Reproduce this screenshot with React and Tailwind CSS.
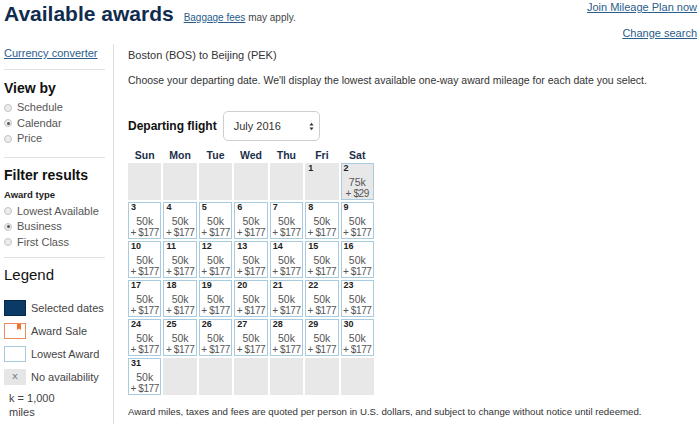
import React from 'react';

const days = [
  null, null, null, null, null, { d: 1, empty: true }, { d: 2, miles: '75k', fee: '$29', gray: true },
];
for (let d = 3; d <= 31; d++) days.push({ d, miles: '50k', fee: '$177' });
while (days.length < 42) days.push(null);

const Radio = ({ label, checked }) => (
  <div className="flex items-center h-[15.5px]">
    <span className="w-[8px] h-[8px] rounded-full border border-[#c4c4c4] bg-[#ececec] flex items-center justify-center">
      {checked && <span className="w-[3px] h-[3px] rounded-full bg-[#555]" />}
    </span>
    <span className="ml-[5px] text-[11px] text-[#555] leading-none">{label}</span>
  </div>
);

const Cell = ({ c }) => {
  if (!c) return <div className="bg-[#e8e8e8] h-[37px]" />;
  if (c.empty)
    return (
      <div className="bg-[#e8e8e8] h-[37px] pl-[3px] text-[9px] font-bold text-[#222] leading-[11px]">{c.d}</div>
    );
  return (
    <div
      className={`h-[37px] border border-[#a9cbdf] ${c.gray ? 'bg-[#e8e8e8]' : 'bg-white'} text-[#555] overflow-hidden`}
    >
      <div className="pl-[2px] text-[9px] font-bold text-[#222] leading-[9px]">{c.d}</div>
      <div className="text-center text-[10.5px] leading-[11px] mt-[4px]">{c.miles}</div>
      <div className="text-center text-[10px] leading-[11px] whitespace-nowrap tracking-[-0.4px]">+ {c.fee}</div>
    </div>
  );
};

export default function App() {
  return (
    <div className="w-[700px] h-[424px] overflow-hidden bg-white text-[#333] font-['Liberation_Sans',Arial,sans-serif]">
      <div className="h-[44px] flex justify-between pl-[4px] pr-[3px]">
        <div className="flex items-baseline pt-[2px]">
          <h1 className="text-[21px] leading-[24px] font-bold text-[#0f2c4f]">Available awards</h1>
          <span className="ml-[10px] text-[10px] text-[#444]">
            <a className="underline text-[#2b5d8c]">Baggage fees</a> may apply.
          </span>
        </div>
        <div className="flex flex-col items-end text-[11px] leading-[14px]">
          <a className="underline text-[#2b5d8c]">Join Mileage Plan now</a>
          <a className="underline text-[#2b5d8c] mt-[12px]">Change search</a>
        </div>
      </div>

      <div className="flex">
        <aside className="w-[114px] border-r border-[#dcdcdc] h-[380px] pl-[4px] pr-[8px] pt-[2px]">
          <a className="block underline text-[#2b5d8c] text-[11px] leading-[14px]">Currency converter</a>
          <div className="mt-[9px] border-t border-[#e2e2e2]" />
          <h2 className="mt-[9px] text-[14px] leading-[18px] font-bold text-[#111]">View by</h2>
          <div className="mt-[3px]">
            <Radio label="Schedule" />
            <Radio label="Calendar" checked />
            <Radio label="Price" />
          </div>
          <div className="mt-[10px] border-t border-[#e2e2e2]" />
          <h2 className="mt-[8px] text-[14px] leading-[18px] font-bold text-[#111]">Filter results</h2>
          <div className="mt-[5px] text-[9.5px] leading-[12px] font-bold text-[#222]">Award type</div>
          <div className="mt-[3px]">
            <Radio label="Lowest Available" />
            <Radio label="Business" checked />
            <Radio label="First Class" />
          </div>
          <div className="mt-[7px] border-t border-[#e2e2e2]" />
          <h2 className="mt-[8px] text-[15px] leading-[18px] text-[#111]">Legend</h2>
          <div className="mt-[16px] flex flex-col gap-[7px] text-[11px] text-[#444]">
            <div className="flex items-center h-[16px]">
              <span className="w-[22px] h-[16px] bg-[#0c3a66] border border-[#07284a]" />
              <span className="ml-[5px]">Selected dates</span>
            </div>
            <div className="flex items-center h-[16px]">
              <span className="relative w-[22px] h-[16px] bg-white border border-[#ee8a62]">
                <svg className="absolute right-[4px] top-0" width="4" height="6" viewBox="0 0 4 6">
                  <path d="M0 0H4V6L2 4.5L0 6Z" fill="#f07228" />
                </svg>
              </span>
              <span className="ml-[5px]">Award Sale</span>
            </div>
            <div className="flex items-center h-[16px]">
              <span className="w-[22px] h-[16px] bg-white border border-[#a9cbdf]" />
              <span className="ml-[5px]">Lowest Award</span>
            </div>
            <div className="flex items-center h-[16px]">
              <span className="w-[22px] h-[16px] bg-[#e6e6e6] flex items-center justify-center text-[8px] text-[#555]">X</span>
              <span className="ml-[5px]">No availability</span>
            </div>
          </div>
          <div className="mt-[6px] pl-[5px] text-[11px] leading-[14px] text-[#444]">
            k = 1,000
            <br />
            miles
          </div>
        </aside>

        <main className="pl-[14px] pt-[4px]">
          <div className="text-[11px] leading-[14px] text-[#333]">Boston (BOS) to Beijing (PEK)</div>
          <div className="mt-[11px] text-[10.5px] leading-[14px] text-[#333]">
            Choose your departing date. We'll display the lowest available one-way award mileage for each date you select.
          </div>
          <div className="mt-[24px] flex items-center">
            <span className="text-[12px] font-bold text-[#111]">Departing flight</span>
            <div className="ml-[6px] w-[97px] h-[30px] border border-[#cfcfcf] rounded-[5px] flex items-center justify-between pl-[10px] pr-[5px]">
              <span className="text-[11px] text-[#333]">July 2016</span>
              <svg width="5" height="9" viewBox="0 0 5 9">
                <path d="M0.5 3.5L2.5 0.8L4.5 3.5Z M0.5 5.5L2.5 8.2L4.5 5.5Z" fill="#333" />
              </svg>
            </div>
          </div>
          <div className="mt-[7px] w-[246px] grid grid-cols-7 gap-x-[2px] text-[10.5px] leading-[14px] font-bold text-[#1c2f4a]">
            {['Sun', 'Mon', 'Tue', 'Wed', 'Thu', 'Fri', 'Sat'].map((d) => (
              <div key={d} className="text-center">{d}</div>
            ))}
          </div>
          <div className="mt-[1px] w-[246px] grid grid-cols-7 gap-x-[2px] gap-y-[2px]">
            {days.map((c, i) => (
              <Cell key={i} c={c} />
            ))}
          </div>
          <div className="mt-[10px] text-[9.7px] leading-[14px] text-[#333] whitespace-nowrap">
            Award miles, taxes and fees are quoted per person in U.S. dollars, and subject to change without notice until redeemed.
          </div>
        </main>
      </div>
    </div>
  );
}
